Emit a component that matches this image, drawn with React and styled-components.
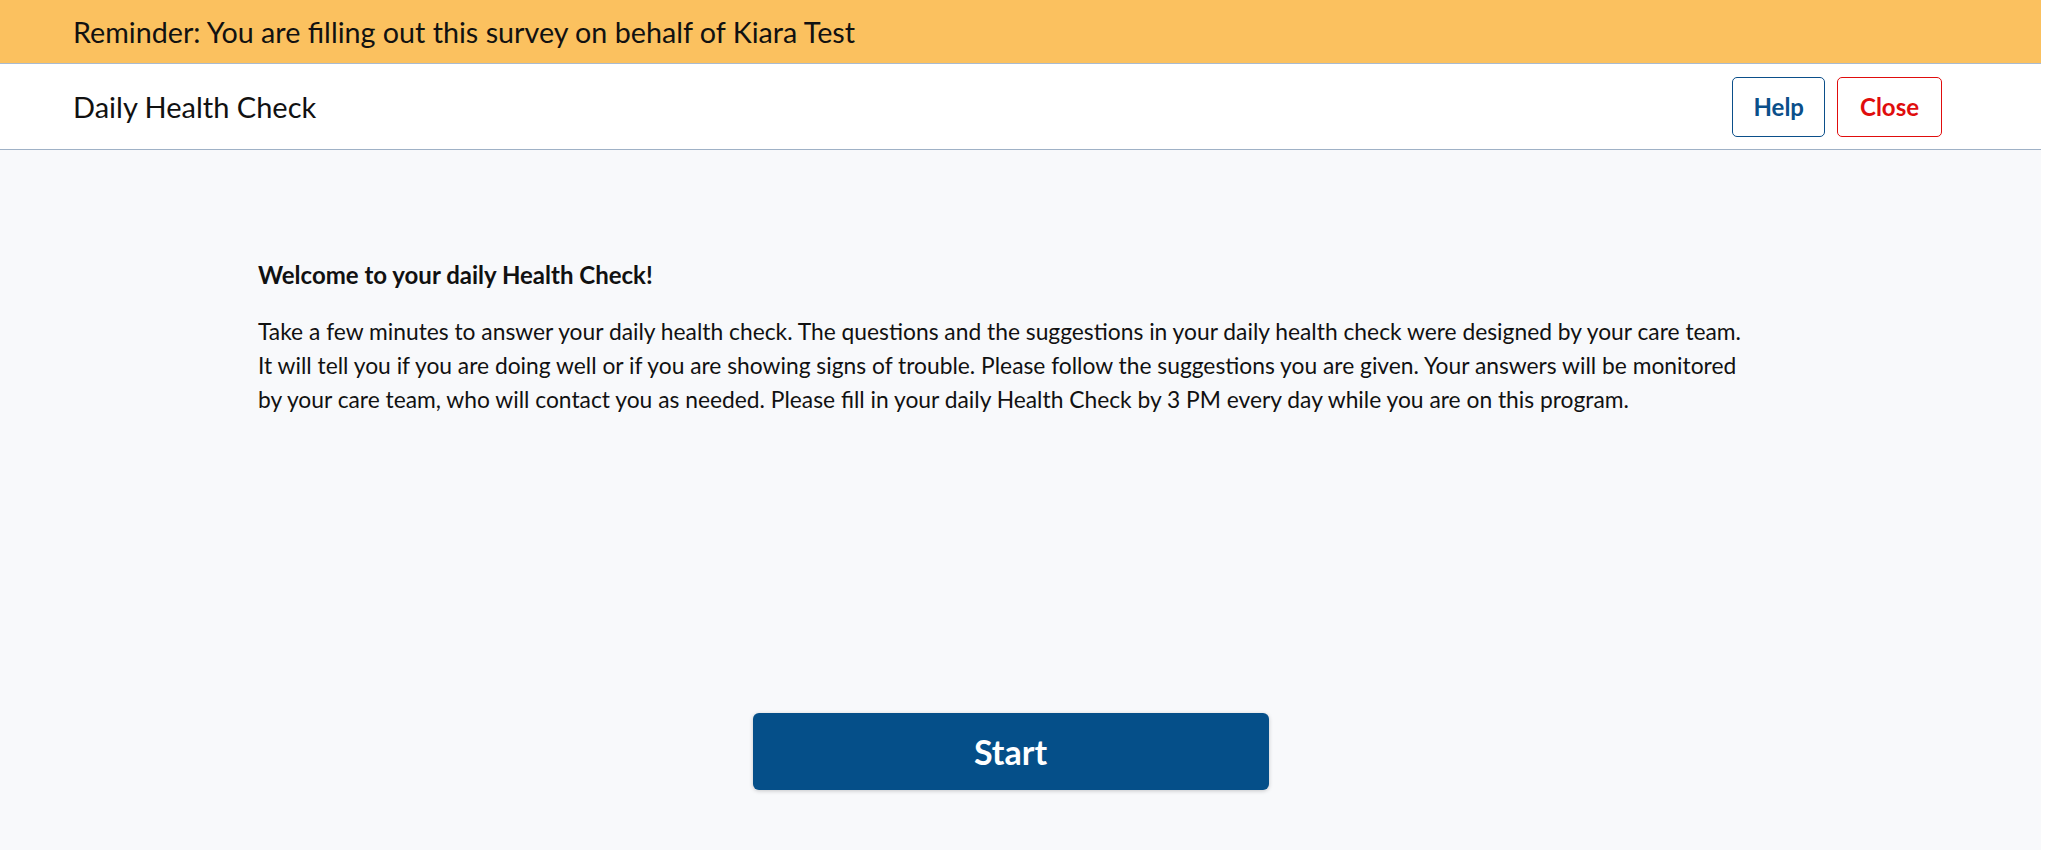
import styled, { createGlobalStyle } from 'styled-components'

const Global = createGlobalStyle`
  html, body {
    margin: 0;
    padding: 0;
    background: #ffffff;
  }
  body {
    font-family: Lato, "Open Sans", sans-serif;
    color: #111111;
  }
`

const Page = styled.div`
  width: calc(100% - 7px);
  min-height: 100vh;
  display: flex;
  flex-direction: column;
  background: #f8f9fb;
`

const Reminder = styled.div`
  height: 63px;
  display: flex;
  align-items: center;
  padding: 0 73px;
  background: #fbc15f;
  border-bottom: 1px solid #a9bbd0;
  font-size: 28.7px;
  color: #111;
`

const Header = styled.header`
  height: 85px;
  display: flex;
  align-items: center;
  justify-content: space-between;
  padding: 0 99px 0 73px;
  background: #ffffff;
  border-bottom: 1px solid #9fb1c6;
`

const Title = styled.h1`
  margin: 0;
  font-size: 29px;
  font-weight: 400;
  color: #111;
`

const Actions = styled.div`
  display: flex;
  gap: 12px;
`

const OutlineButton = styled.button`
  height: 60px;
  padding: 0 ${({ $pad }) => $pad}px;
  border-radius: 5px;
  background: #ffffff;
  border: 1.5px solid ${({ $color }) => $color};
  color: ${({ $color }) => $color};
  font-family: Lato, sans-serif;
  font-weight: 700;
  font-size: 24px;
  cursor: pointer;
`

const Main = styled.main`
  flex: 1;
  display: flex;
  flex-direction: column;
  align-items: center;
  padding: 110px 0 60px;
`

const Content = styled.section`
  width: 1525px;
  flex: 1;
`

const Heading = styled.h2`
  margin: 0 0 24px;
  font-size: 24px;
  font-weight: 700;
  line-height: 30px;
`

const Body = styled.p`
  max-width: 1490px;
  margin: 0;
  font-size: 22.8px;
  line-height: 34px;
`

const StartButton = styled.button`
  width: 516px;
  height: 77px;
  margin-right: 20px;
  border: none;
  border-radius: 6px;
  background: #054f89;
  color: #ffffff;
  font-family: Lato, sans-serif;
  font-size: 34px;
  font-weight: 700;
  box-shadow: 0 1px 4px rgba(0, 0, 0, 0.2);
  cursor: pointer;
`

export default function App() {
  return (
    <>
      <Global />
      <Page>
        <Reminder>Reminder: You are filling out this survey on behalf of Kiara Test</Reminder>
        <Header>
          <Title>Daily Health Check</Title>
          <Actions>
            <OutlineButton $color="#0b4f8a" $pad={20}>Help</OutlineButton>
            <OutlineButton $color="#e00d0d" $pad={22}>Close</OutlineButton>
          </Actions>
        </Header>
        <Main>
          <Content>
            <Heading>Welcome to your daily Health Check!</Heading>
            <Body>
              Take a few minutes to answer your daily health check. The questions and the suggestions in your daily health check were designed by your care team. It will tell you if you are doing well or if you are showing signs of trouble. Please follow the suggestions you are given. Your answers will be monitored by your care team, who will contact you as needed. Please fill in your daily Health Check by 3 PM every day while you are on this program.
            </Body>
          </Content>
          <StartButton>Start</StartButton>
        </Main>
      </Page>
    </>
  )
}
